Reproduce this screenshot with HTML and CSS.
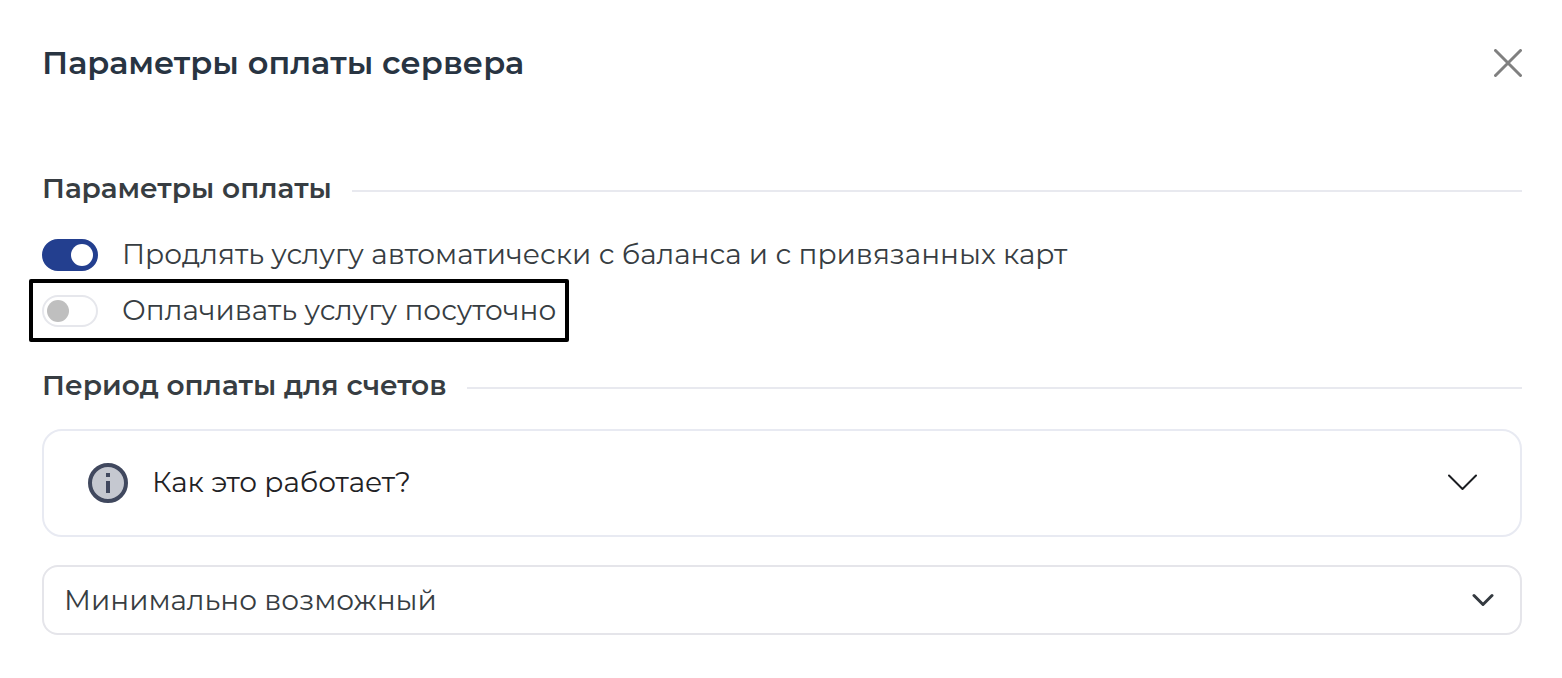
FILE: index.html
```
<!DOCTYPE html>
<html lang="ru">
<head>
	<meta charset="utf-8">
	<meta name="viewport" content="width=device-width, initial-scale=1">
	<title>Параметры оплаты сервера</title>
	<link rel="stylesheet" href="styles.css">
</head>
<body>
	<main class="modal">
		<header class="modal-header">
			<h1 class="modal-title">Параметры оплаты сервера</h1>
			<button type="button" class="close" aria-label="Закрыть">
				<svg width="28" height="28" viewBox="0 0 28 28" fill="none" stroke="#808080" stroke-width="3" stroke-linecap="round"><path d="M1.500 1.500l25 25M26.500 1.500l-25 25"/></svg>
			</button>
		</header>

		<form class="modal-body">
			<h2 class="section-title">Параметры оплаты</h2>
			<div class="switches">
				<label class="switch-row">
					<input type="checkbox" class="switch" name="autoprolong" checked>
					<span class="switch-text">Продлять услугу автоматически с баланса и с привязанных карт</span>
				</label>
				<label class="switch-row framed">
					<input type="checkbox" class="switch" name="daily">
					<span class="switch-text">Оплачивать услугу посуточно</span>
				</label>
			</div>

			<h2 class="section-title" id="period-title">Период оплаты для счетов</h2>
			<button type="button" class="accordion" aria-expanded="false">
				<svg width="40" height="40" viewBox="0 0 40 40"><circle cx="20" cy="20" r="18" fill="#c5c8d0" stroke="#40485e" stroke-width="4"/><path fill="#40485e" d="M18 10h4v4h-4zM18 18h4v12h-4z"/></svg>
				<span class="accordion-text">Как это работает?</span>
				<svg width="30" height="18" viewBox="0 0 30 18" fill="none" stroke="#1b1d21" stroke-width="2" stroke-linecap="round" stroke-linejoin="round"><path d="M1 1.500L14.500 15 28 1.500"/></svg>
			</button>
			<div class="select-wrap">
				<select class="select" name="period" aria-labelledby="period-title">
					<option>Минимально возможный</option>
				</select>
				<svg class="select-arrow" width="22" height="14" viewBox="0 0 22 14" fill="none" stroke="#343a40" stroke-width="3" stroke-linecap="round" stroke-linejoin="round"><path d="M2 2.500l9 9 9-9"/></svg>
			</div>
		</form>
	</main>
</body>
</html>
```
FILE: styles.css
```
*{
	box-sizing: border-box;
}
body{
	margin: 0;
	background: #fff;
	color: #373d42;
	font-family: Montserrat, Inter, sans-serif;
	font-size: 28px;
	line-height: 32px;
}
button, select{
	font: inherit;
	cursor: pointer;
}
svg{
	display: block;
	flex-shrink: 0;
}
.modal{
	padding: 43px 40px 43px 42px;
}
.modal-header{
	display: flex;
	justify-content: space-between;
	align-items: center;
	margin-bottom: 89px;
}
.modal-title{
	margin: 0;
	font-size: 32px;
	line-height: 40px;
	font-weight: 600;
	color: #283442;
}
.close{
	padding: 0;
	border: 0;
	background: none;
}
.section-title{
	display: flex;
	align-items: center;
	gap: 20px;
	margin: 0;
	font-size: 28px;
	font-weight: 600;
}
.section-title::after{
	content: "";
	flex: 1;
	height: 2px;
	margin-top: 6px;
	background: #e8e9ef;
}
.switches{
	display: flex;
	flex-direction: column;
	align-items: flex-start;
	gap: 8px;
	margin: 35px 0 27px;
}
.switch-row{
	display: flex;
	align-items: center;
	gap: 24px;
	cursor: pointer;
}
.switch-text, .accordion-text{
	line-height: 30px;
	padding-bottom: 2px;
}
.framed{
	margin-left: -13px;
	padding: 12px 9px 11px;
	border: 4px solid #000;
	border-radius: 2px;
}
.switch{
	appearance: none;
	flex-shrink: 0;
	display: flex;
	align-items: center;
	width: 56px;
	height: 32px;
	margin: 0;
	padding: 0 3px;
	border: 2px solid #e6e7ec;
	border-radius: 16px;
	background: #fff;
	cursor: pointer;
}
.switch::before{
	content: "";
	width: 22px;
	height: 22px;
	border-radius: 50%;
	background: #bfbfbf;
}
.switch:checked{
	justify-content: flex-end;
	border-color: #233f8f;
	background: #233f8f;
}
.switch:checked::before{
	background: #fff;
}
.accordion{
	display: flex;
	align-items: center;
	gap: 24px;
	width: 100%;
	margin: 28px 0;
	padding: 32px 42px 32px 44px;
	border: 2px solid #e8eaf2;
	border-radius: 20px;
	background: #fff;
	color: #1f2225;
	text-align: left;
}
.accordion-text{
	flex: 1;
}
.select-wrap{
	display: grid;
	align-items: center;
}
.select-wrap > *{
	grid-area: 1 / 1;
}
.select{
	appearance: none;
	width: 100%;
	height: 70px;
	padding: 0 60px 0 20px;
	border: 2px solid #e5e5ea;
	border-radius: 16px;
	background: #fff;
	color: #373d42;
}
.select-arrow{
	justify-self: end;
	margin-right: 28px;
	pointer-events: none;
}
```
